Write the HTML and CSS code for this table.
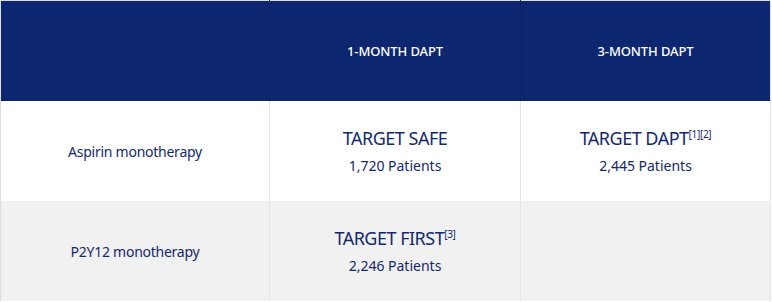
FILE: index.html
```html
<!DOCTYPE html>
<html>
<head>
<meta charset="utf-8">
<link rel="stylesheet" href="styles.css">
</head>
<body>
<table class="trials">
  <thead>
    <tr>
      <th class="corner"></th>
      <th>1-MONTH DAPT</th>
      <th>3-MONTH DAPT</th>
    </tr>
  </thead>
  <tbody>
    <tr class="row-white">
      <td class="label">Aspirin monotherapy</td>
      <td><div class="trial">TARGET SAFE</div><div class="count">1,720 Patients</div></td>
      <td><div class="trial">TARGET DAPT<sup>[1][2]</sup></div><div class="count">2,445 Patients</div></td>
    </tr>
    <tr class="row-gray">
      <td class="label">P2Y12 monotherapy</td>
      <td><div class="trial">TARGET FIRST<sup>[3]</sup></div><div class="count">2,246 Patients</div></td>
      <td></td>
    </tr>
  </tbody>
</table>
</body>
</html>
```
FILE: styles.css
```css
html, body {
  margin: 0;
  padding: 0;
  background: #ffffff;
}
body {
  font-family: "Noto Sans", "Open Sans", sans-serif;
  color: #13286e;
}
.trials {
  border-collapse: collapse;
  width: 771px;
  table-layout: fixed;
  border-top: 1px solid #dcdcdc;
  border-left: 1px solid #dcdcdc;
  border-right: 1px solid #e6e6e6;
}
.trials th, .trials td {
  padding: 0;
  text-align: center;
  vertical-align: middle;
}
.trials th {
  background: #0c2670;
  color: #ffffff;
  font-size: 13px;
  font-weight: 500;
  letter-spacing: -0.1px;
  height: 100px;
  border-left: 1px solid #0a2262;
}
.trials th.corner {
  width: 268px;
  border-left: none;
}
.trials th:nth-child(2) {
  width: 250px;
}
.trials td {
  height: 100px;
  border-left: 1px solid #e6e6e6;
}
.trials td.label {
  font-size: 14px;
  letter-spacing: -0.25px;
  border-left: none;
}
.row-white td {
  background: #ffffff;
}
.row-gray td {
  background: #f1f1f1;
}
.trial {
  font-size: 18px;
  line-height: 24px;
  letter-spacing: -0.5px;
}
.trial sup {
  font-size: 10px;
  letter-spacing: -0.3px;
  vertical-align: 7px;
  line-height: 0;
}
.count {
  font-size: 14px;
  line-height: 20px;
  margin-top: 6px;
}
```
